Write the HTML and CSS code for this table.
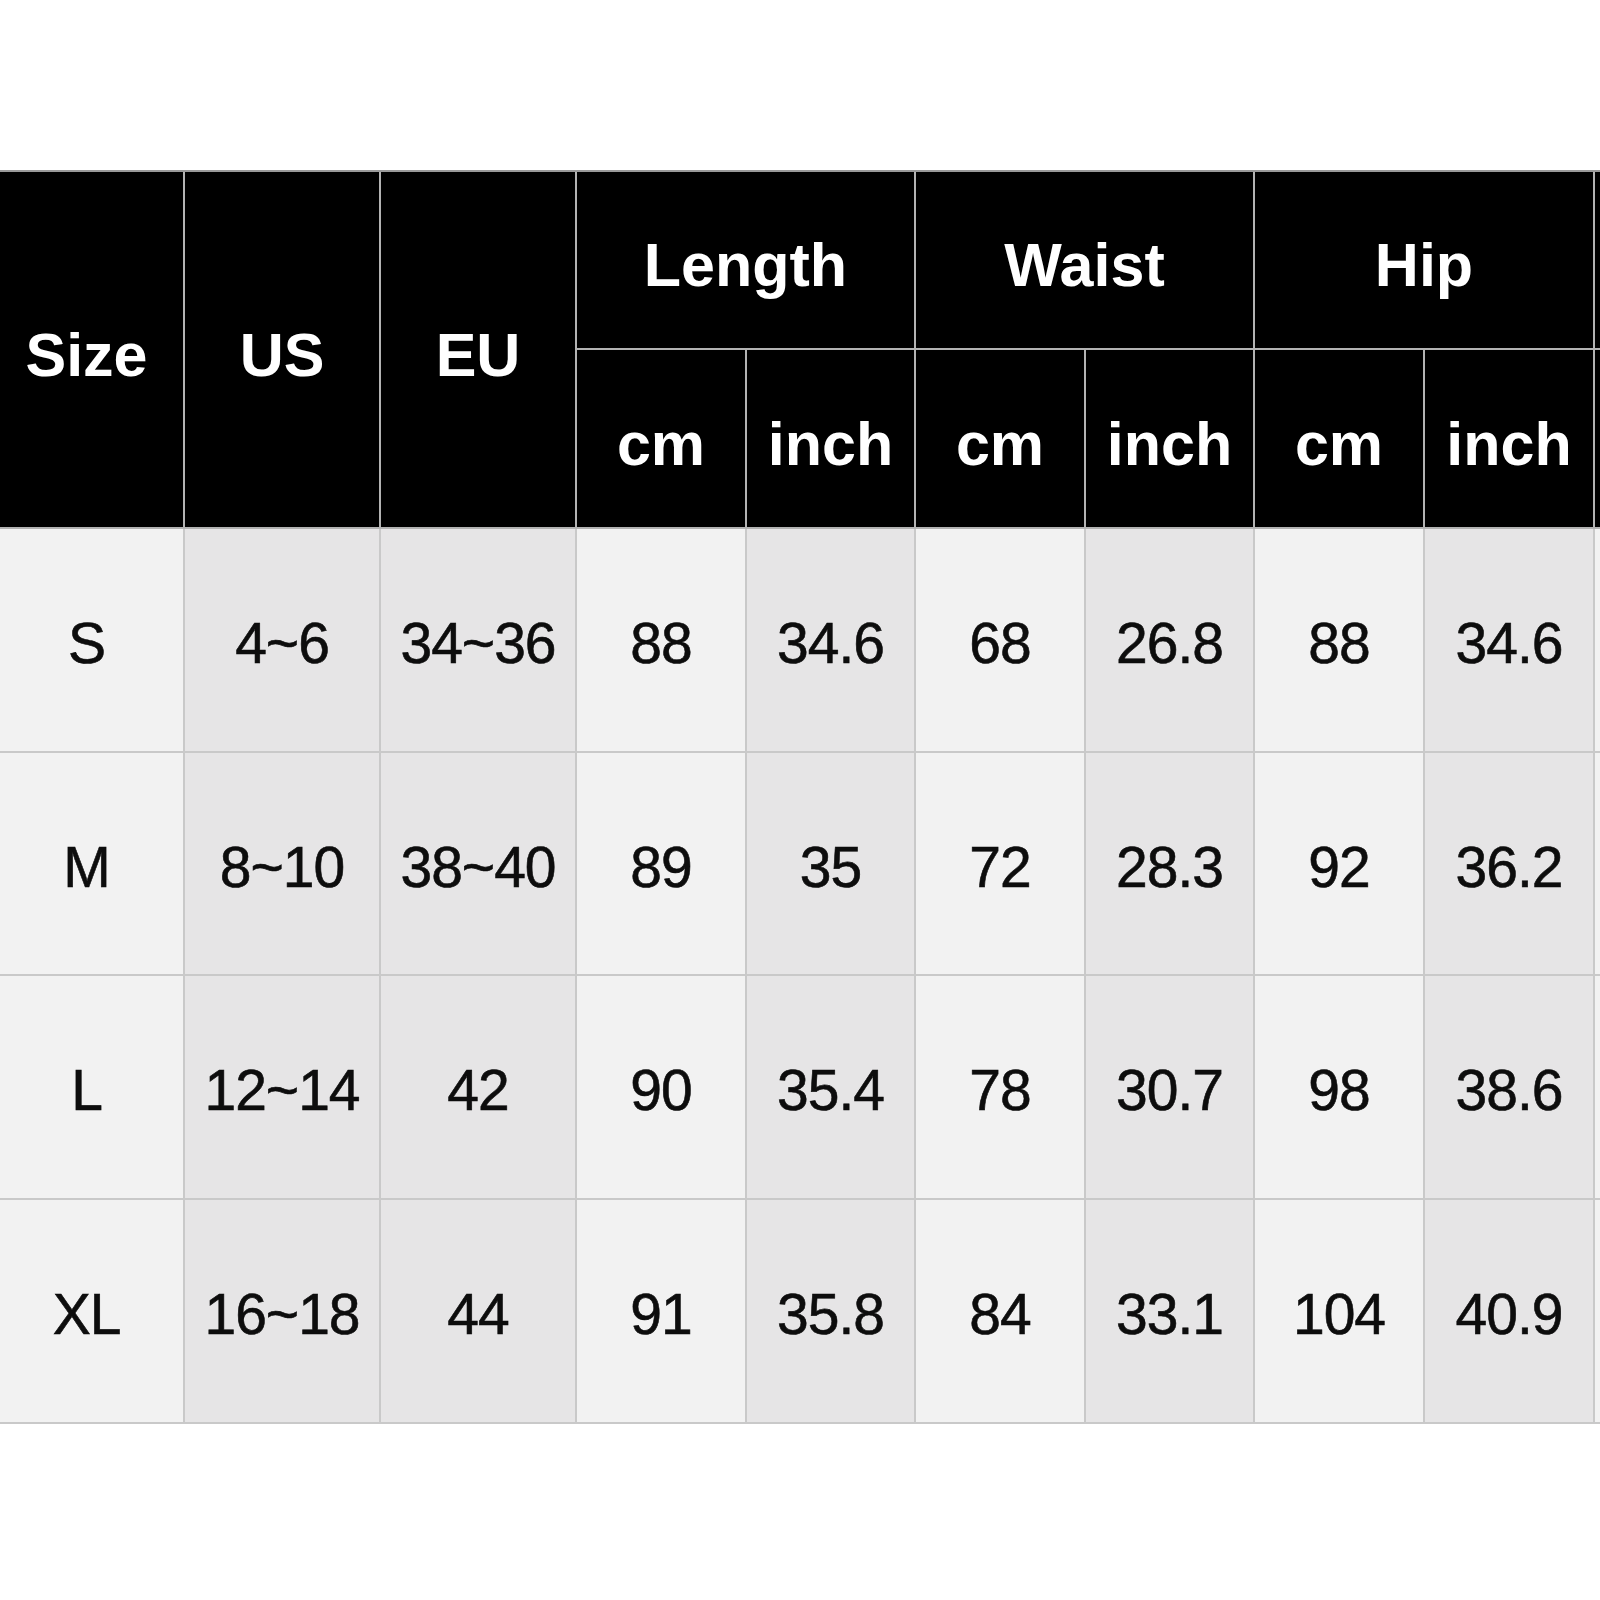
FILE: index.html
```html
<!DOCTYPE html>
<html lang="en">
<head>
<meta charset="utf-8">
<title>Size Chart</title>
<link rel="stylesheet" href="styles.css">
</head>
<body>
<div class="page">
  <div class="chart">
    <div class="h c-size span2">Size</div>
    <div class="h span2">US</div>
    <div class="h span2">EU</div>
    <div class="h group">Length</div>
    <div class="h group">Waist</div>
    <div class="h group">Hip</div>
    <div class="h"></div>
    <div class="h">cm</div>
    <div class="h">inch</div>
    <div class="h">cm</div>
    <div class="h">inch</div>
    <div class="h">cm</div>
    <div class="h">inch</div>
    <div class="h"></div>

    <div class="d lt c-size">S</div><div class="d dk">4~6</div><div class="d dk">34~36</div>
    <div class="d lt">88</div><div class="d dk">34.6</div><div class="d lt">68</div><div class="d dk">26.8</div><div class="d lt">88</div><div class="d dk">34.6</div><div class="d lt"></div>

    <div class="d lt c-size">M</div><div class="d dk">8~10</div><div class="d dk">38~40</div>
    <div class="d lt">89</div><div class="d dk">35</div><div class="d lt">72</div><div class="d dk">28.3</div><div class="d lt">92</div><div class="d dk">36.2</div><div class="d lt"></div>

    <div class="d lt c-size">L</div><div class="d dk">12~14</div><div class="d dk">42</div>
    <div class="d lt">90</div><div class="d dk">35.4</div><div class="d lt">78</div><div class="d dk">30.7</div><div class="d lt">98</div><div class="d dk">38.6</div><div class="d lt"></div>

    <div class="d lt c-size">XL</div><div class="d dk">16~18</div><div class="d dk">44</div>
    <div class="d lt">91</div><div class="d dk">35.8</div><div class="d lt">84</div><div class="d dk">33.1</div><div class="d lt">104</div><div class="d dk">40.9</div><div class="d lt"></div>
  </div>
</div>
</body>
</html>
```
FILE: styles.css
```css
html, body {
  margin: 0;
  padding: 0;
  background: #ffffff;
}

.page {
  width: 1600px;
  height: 1600px;
  overflow: hidden;
  padding-top: 170px;
  box-sizing: border-box;
}

.chart {
  display: grid;
  grid-template-columns: 185px 196px 196px 170px 169px 170px 169px 170px 170px 170px;
  grid-template-rows: 178px 179px 224px 223px 224px 224px;
  width: 1788px;
  border-top: 2px solid #9a9a9a;
  font-family: "Liberation Sans", Arial, sans-serif;
}

.h, .d {
  box-sizing: border-box;
  display: flex;
  align-items: center;
  justify-content: center;
  border-right: 2px solid #b3b3b3;
  border-bottom: 2px solid #b3b3b3;
}

.h {
  background: #000000;
  color: #ffffff;
  font-weight: bold;
  font-size: 61px;
  padding-top: 10px;
}

.span2 {
  grid-row: span 2;
}

.group {
  grid-column: span 2;
}

.d {
  color: #0d0d0d;
  font-size: 57px;
  letter-spacing: -1px;
  -webkit-text-stroke: 0.6px #0d0d0d;
  padding-top: 6px;
  border-color: #c9c9c9;
}

.lt {
  background: #f2f2f2;
}

.dk {
  background: #e6e5e6;
}

.c-size {
  padding-right: 10px;
}
```
